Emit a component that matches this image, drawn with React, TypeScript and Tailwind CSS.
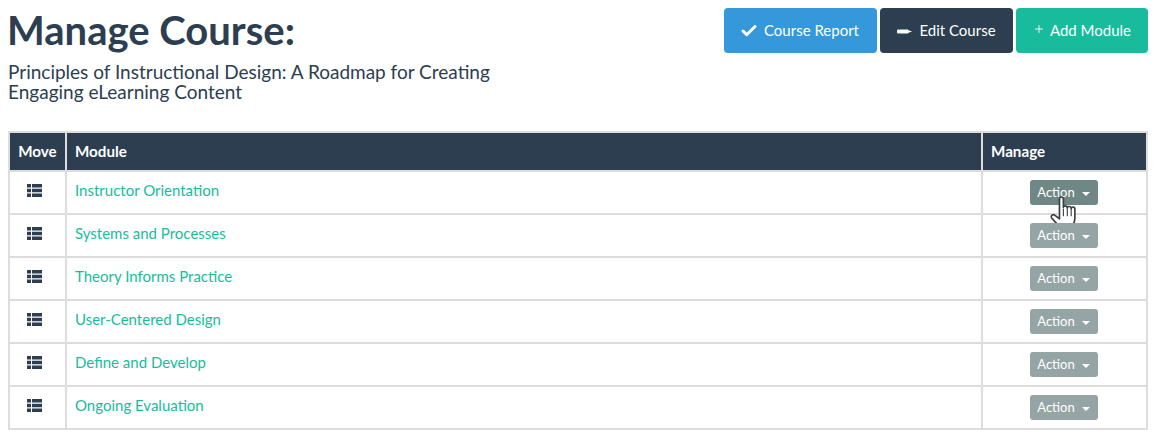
import React from 'react';
import { Check, Plus } from 'lucide-react';

const modules = [
  'Instructor Orientation',
  'Systems and Processes',
  'Theory Informs Practice',
  'User-Centered Design',
  'Define and Develop',
  'Ongoing Evaluation',
];

const ListIcon = () => (
  <svg width="15" height="13" viewBox="0 0 15 13" className="fill-[#2c3e50]">
    <rect x="0" y="0" width="4" height="3.5" />
    <rect x="5" y="0" width="10" height="3.5" />
    <rect x="0" y="4.75" width="4" height="3.5" />
    <rect x="5" y="4.75" width="10" height="3.5" />
    <rect x="0" y="9.5" width="4" height="3.5" />
    <rect x="5" y="9.5" width="10" height="3.5" />
  </svg>
);

const PencilIcon = () => (
  <svg width="15" height="5" viewBox="0 0 15 5" className="mt-[2px] fill-white">
    <rect x="0" y="0.5" width="3" height="4" rx="1" />
    <rect x="3" y="0.5" width="8" height="4" />
    <path d="M11 1 L15 2.500 L11 4 Z" />
  </svg>
);

const HandCursor = () => (
  <svg width="29" height="37" viewBox="0 0 26 33" className="absolute left-[20px] top-[15px]">
    <path
      d="M8.500 3.500c0-2.400 3.500-2.400 3.500 0V11c0-1.800 3.500-1.800 3.500.5 0-1.800 3.500-1.800 3.500.5 0-1.800 3.300-1.800 3.300.5V21c0 4-2 6-3 9.500H10.500C8.500 27 4 24 1.500 20.500c-1.200-2.200 1.200-3.800 3-2.300l4 3z"
      fill="#ffffff"
      stroke="#3a3f42"
      strokeWidth="1.500"
      strokeLinejoin="round"
    />
    <path d="M12 12v7M15.500 12v7M19 12v7" stroke="#3a3f42" strokeWidth="1" />
  </svg>
);

const ActionButton = ({ hover }: { hover: boolean }) => (
  <div className="relative">
    <div className={`flex h-[25px] w-[68px] items-center justify-center gap-[7px] rounded-[3px] text-[13px] text-white ${hover ? 'bg-[#6f8785]' : 'bg-[#95a5a6]'}`}>
      <span>Action</span>
      <span className="mt-[2px] border-x-[4px] border-t-[4px] border-x-transparent border-t-white" />
    </div>
    {hover && <HandCursor />}
  </div>
);

const App = () => {
  return (
    <div className="h-[438px] w-[1156px] overflow-hidden bg-white font-['Lato','Open_Sans',sans-serif] text-[#2c3e50]">
      <div className="flex items-start justify-between pl-2 pr-2 pt-2">
        <div>
          <h1 className="mt-[1px] -ml-[1px] text-[40px] leading-[43px] font-bold">Manage Course:</h1>
          <p className="mt-[10px] w-[500px] text-[19px] leading-[20px]">
            Principles of Instructional Design: A Roadmap for Creating Engaging eLearning Content
          </p>
        </div>
        <div className="flex gap-[3px] text-[15px] text-white">
          <div className="flex h-[45px] w-[153px] items-center justify-center gap-[6px] rounded-[4px] bg-[#3498db] pr-[2px]">
            <Check size={18} strokeWidth={4} />
            <span>Course Report</span>
          </div>
          <div className="flex h-[45px] w-[133px] items-center justify-center gap-[7px] rounded-[4px] bg-[#2c3e50]">
            <PencilIcon />
            <span>Edit Course</span>
          </div>
          <div className="flex h-[45px] w-[132px] items-center justify-center gap-[5px] rounded-[4px] bg-[#18bc9c]">
            <Plus size={12} strokeWidth={1.75} className="mb-[3px]" />
            <span>Add Module</span>
          </div>
        </div>
      </div>
      <table className="mt-[29px] ml-[8px] w-[1140px] table-fixed border-collapse text-[15px]">
        <thead>
          <tr className="h-[39px] bg-[#2c3e50] text-left text-[15.2px] font-bold text-white">
            <th className="w-[57px] border-2 border-[#dddddd] text-center">Move</th>
            <th className="border-2 border-[#dddddd] pl-2">Module</th>
            <th className="w-[165px] border-2 border-[#dddddd] pl-2">Manage</th>
          </tr>
        </thead>
        <tbody>
          {modules.map((name, i) => (
            <tr key={name} className="h-[43px]">
              <td className="border-2 border-[#dddddd] pb-[4px]">
                <div className="flex justify-center pr-[6px]">
                  <ListIcon />
                </div>
              </td>
              <td className="border-2 border-[#dddddd] pb-[5px] pl-2 text-[#18bc9c]">{name}</td>
              <td className="border-2 border-[#dddddd]">
                <div className="flex justify-center pr-[2px]">
                  <ActionButton hover={i === 0} />
                </div>
              </td>
            </tr>
          ))}
        </tbody>
      </table>
    </div>
  );
};

export default App;
